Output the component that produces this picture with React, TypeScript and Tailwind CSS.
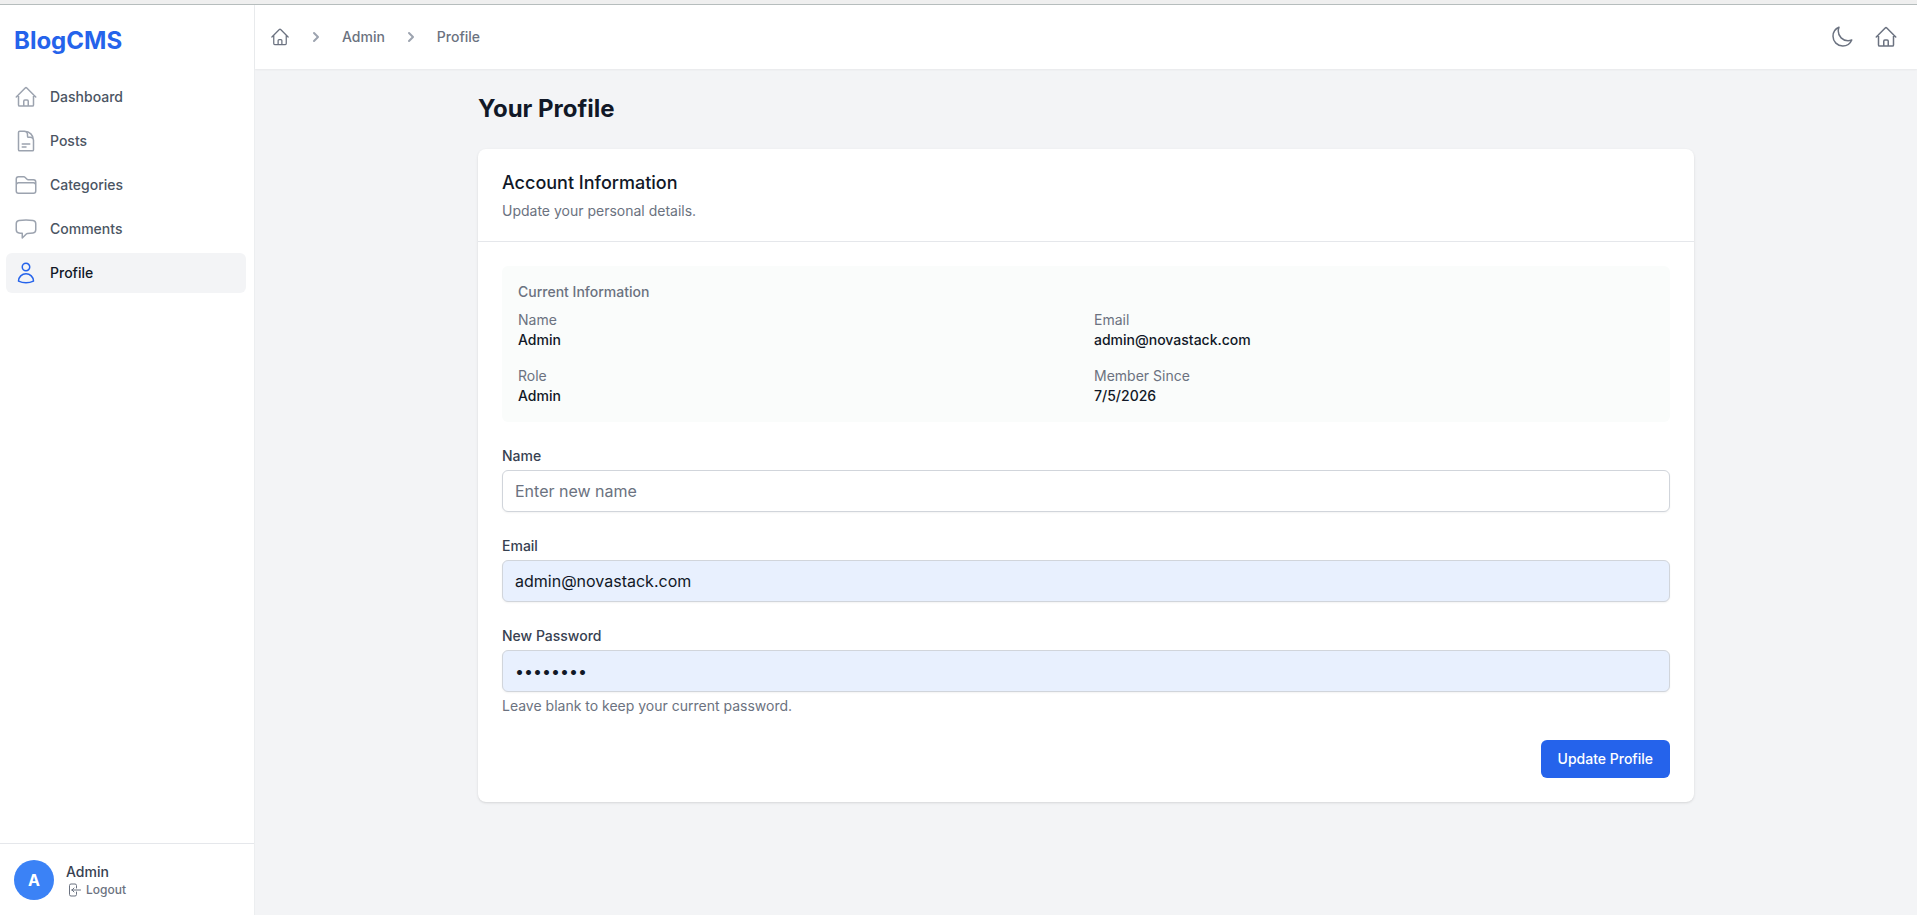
import type { ComponentType, ReactNode } from "react";
import {
  HiOutlineHome,
  HiOutlineDocumentText,
  HiOutlineFolder,
  HiOutlineChatBubbleLeft,
  HiOutlineUser,
  HiOutlineMoon,
  HiOutlineArrowLeftOnRectangle,
} from "react-icons/hi2";

type NavItem = { label: string; icon: ComponentType<{ className?: string }>; active?: boolean };

const navItems: NavItem[] = [
  { label: "Dashboard", icon: HiOutlineHome },
  { label: "Posts", icon: HiOutlineDocumentText },
  { label: "Categories", icon: HiOutlineFolder },
  { label: "Comments", icon: HiOutlineChatBubbleLeft },
  { label: "Profile", icon: HiOutlineUser, active: true },
];

const details = [
  { label: "Name", value: "Admin" },
  { label: "Email", value: "admin@novastack.com" },
  { label: "Role", value: "Admin" },
  { label: "Member Since", value: "7/5/2026" },
];

function ChevronRight() {
  return (
    <svg viewBox="0 0 20 20" fill="currentColor" className="size-5 shrink-0 text-[#9ca3af]">
      <path
        fillRule="evenodd"
        clipRule="evenodd"
        d="M7.293 14.707a1 1 0 010-1.414L10.586 10 7.293 6.707a1 1 0 011.414-1.414l4 4a1 1 0 010 1.414l-4 4a1 1 0 01-1.414 0z"
      />
    </svg>
  );
}

function Sidebar() {
  return (
    <aside className="flex w-[254px] shrink-0 flex-col bg-white">
      <div className="flex flex-1 flex-col pt-5">
        <div className="pl-3.5 text-2xl font-bold text-[#2563eb]">BlogCMS</div>
        <nav className="mt-5 flex flex-col gap-1 pr-2 pl-1.5">
          {navItems.map(({ label, icon: Icon, active }) => (
            <a
              key={label}
              className={
                active
                  ? "flex items-center gap-3 rounded-md bg-[#f3f4f6] p-2 text-sm font-medium text-[#111827]"
                  : "flex items-center gap-3 rounded-md p-2 text-sm font-medium text-[#4b5563]"
              }
            >
              <Icon className={active ? "size-6 text-[#2563eb]" : "size-6 text-[#9ca3af]"} />
              {label}
            </a>
          ))}
        </nav>
      </div>
      <div className="flex h-[72px] items-start gap-3 border-t border-[#e5e7eb] pt-4 pl-3.5">
        <div className="flex size-10 items-center justify-center rounded-full bg-[#3b82f6] font-bold text-white">A</div>
        <div className="pt-0.5">
          <p className="text-sm font-medium text-[#374151]">Admin</p>
          <button className="flex items-center gap-1 text-xs font-medium text-[#6b7280]">
            <HiOutlineArrowLeftOnRectangle className="size-4" />
            Logout
          </button>
        </div>
      </div>
    </aside>
  );
}

function Header() {
  return (
    <header className="z-10 flex h-16 shrink-0 items-center justify-between bg-white pr-[19px] pl-[15px] text-[#6b7280] shadow-[0_1px_2px_0_rgba(0,0,0,0.05)]">
      <div className="flex items-center gap-4 text-sm font-medium">
        <HiOutlineHome className="size-5" />
        <ChevronRight />
        <span>Admin</span>
        <ChevronRight />
        <span>Profile</span>
      </div>
      <div className="flex items-center gap-5">
        <HiOutlineMoon className="size-6" />
        <HiOutlineHome className="size-6" />
      </div>
    </header>
  );
}

function Field({ label, children }: { label: string; children: ReactNode }) {
  return (
    <div>
      <label className="block text-sm font-medium text-[#374151]">{label}</label>
      {children}
    </div>
  );
}

const inputBase =
  "mt-1 block h-[42px] w-full rounded-md border border-[#d1d5db] px-3 py-2 text-base shadow-[0_1px_2px_0_rgba(0,0,0,0.05)] outline-none";

export default function App() {
  return (
    <div
      className="flex h-[915px] w-full flex-col overflow-hidden bg-[#f3f4f6]"
      style={{ fontFamily: 'Inter, "Liberation Sans", sans-serif' }}
    >
      <div className="h-[5px] shrink-0 border-b border-[#b6bdbd] bg-[#efefef]" />
      <div className="flex min-h-0 flex-1">
        <Sidebar />
        <div className="flex min-w-0 flex-1 flex-col border-l border-[#eceef0]">
          <Header />
          <main className="mx-auto w-full max-w-7xl px-8 py-6">
            <h1 className="text-2xl font-bold text-[#111827]">Your Profile</h1>
            <section className="mt-6 rounded-lg bg-white shadow-[0_1px_3px_0_rgba(0,0,0,0.1),0_1px_2px_-1px_rgba(0,0,0,0.1)]">
              <div className="border-b border-[#e5e7eb] px-6 py-5">
                <h2 className="text-lg font-medium text-[#111827]">Account Information</h2>
                <p className="mt-1 text-sm text-[#6b7280]">Update your personal details.</p>
              </div>
              <div className="flex flex-col gap-6 p-6">
                <div className="rounded-md bg-[#fafcfb] p-4 text-sm">
                  <h3 className="mb-2 font-medium text-[#6b7280]">Current Information</h3>
                  <dl className="grid grid-cols-2 gap-4">
                    {details.map((d) => (
                      <div key={d.label}>
                        <dt className="text-[#6b7280]">{d.label}</dt>
                        <dd className="font-medium text-[#111827]">{d.value}</dd>
                      </div>
                    ))}
                  </dl>
                </div>
                <Field label="Name">
                  <input className={`${inputBase} bg-white placeholder:text-[#6b7280]`} placeholder="Enter new name" />
                </Field>
                <Field label="Email">
                  <input className={`${inputBase} bg-[#e8f0fe] text-[#111827]`} defaultValue="admin@novastack.com" />
                </Field>
                <Field label="New Password">
                  <input type="password" className={`${inputBase} bg-[#e8f0fe] text-[#111827]`} defaultValue="password" />
                  <p className="mt-1 text-sm text-[#6b7280]">Leave blank to keep your current password.</p>
                </Field>
                <div className="flex justify-end">
                  <button className="rounded-md border border-transparent bg-[#2563eb] px-4 py-2 text-sm font-medium text-white">
                    Update Profile
                  </button>
                </div>
              </div>
            </section>
          </main>
        </div>
      </div>
    </div>
  );
}
